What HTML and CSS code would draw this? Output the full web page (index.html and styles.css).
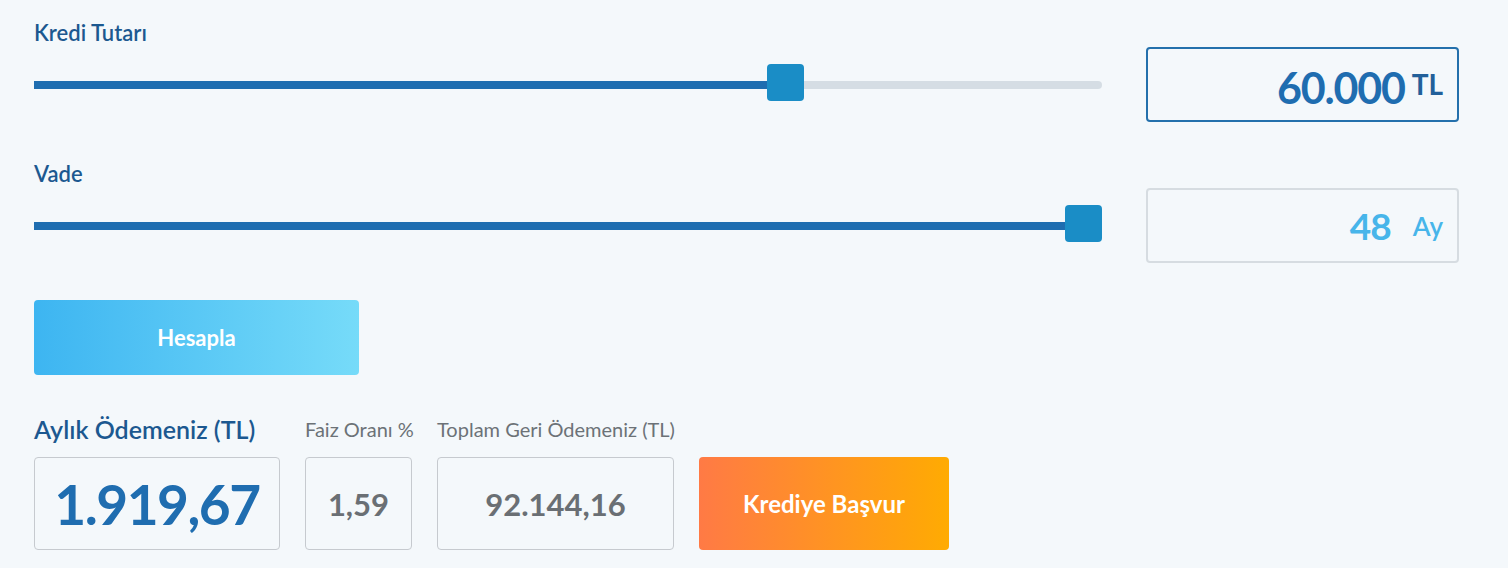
FILE: index.html
```html
<!DOCTYPE html>
<html lang="tr">
<head>
    <meta charset="UTF-8">
    <meta name="viewport" content="width=device-width, initial-scale=1.0">
    <title>Kredi Hesaplama</title>
    <link rel="stylesheet" href="styles.css">
</head>
<body>
    <main class="calc">
        <div class="field">
            <label class="field-label">Kredi Tutarı</label>
            <div class="field-row">
                <div class="slider" style="--p: 0.711">
                    <div class="slider-fill"></div>
                    <div class="slider-thumb"></div>
                </div>
                <div class="value-box value-box--active">
                    <span class="amount-num">60.000</span><span class="amount-unit">TL</span>
                </div>
            </div>
        </div>

        <div class="field">
            <label class="field-label">Vade</label>
            <div class="field-row">
                <div class="slider" style="--p: 1">
                    <div class="slider-fill"></div>
                    <div class="slider-thumb"></div>
                </div>
                <div class="value-box">
                    <span class="term-num">48</span><span class="term-unit">Ay</span>
                </div>
            </div>
        </div>

        <button class="btn btn-calc">Hesapla</button>

        <div class="results">
            <div class="result result--monthly">
                <div class="result-label result-label--main">Aylık Ödemeniz (TL)</div>
                <div class="result-box result-box--main">1.919,67</div>
            </div>
            <div class="result result--rate">
                <div class="result-label">Faiz Oranı %</div>
                <div class="result-box">1,59</div>
            </div>
            <div class="result result--total">
                <div class="result-label">Toplam Geri Ödemeniz (TL)</div>
                <div class="result-box">92.144,16</div>
            </div>
            <button class="btn btn-apply">Krediye Başvur</button>
        </div>
    </main>
</body>
</html>
```

FILE: styles.css
```css
body {
    margin: 0;
    background-color: #f4f8fb;
    font-family: Lato, "Open Sans", sans-serif;
}
.calc {
    padding: 18px 49px 0 34px;
}
.field {
    margin-bottom: 37px;
}
.field-label {
    display: block;
    padding-top: 3px;
    font-size: 22px;
    line-height: 24px;
    font-weight: 600;
    color: #1c5890;
    margin-bottom: 2px;
}
.field-row {
    display: flex;
    align-items: center;
    gap: 44px;
}
.slider {
    position: relative;
    width: 1068px;
    height: 8px;
    background-color: #d5dde4;
    border-radius: 0 4px 4px 0;
}
.slider-fill {
    width: calc((100% - 37px) * var(--p) + 18px);
    height: 100%;
    background-color: #1e6db0;
}
.slider-thumb {
    position: absolute;
    top: -17px;
    left: calc((100% - 37px) * var(--p));
    width: 37px;
    height: 37px;
    background-color: #1a8dc6;
    border-radius: 4px;
}
.value-box {
    box-sizing: border-box;
    width: 313px;
    height: 75px;
    border: 2px solid #d6dce1;
    border-radius: 4px;
    padding-right: 14px;
    text-align: right;
    line-height: 71px;
    white-space: nowrap;
}
.value-box--active {
    border-color: #2470ac;
}
.amount-num {
    font-size: 43px;
    font-weight: 700;
    letter-spacing: -1.2px;
    color: #1f6db0;
}
.amount-unit {
    font-size: 28px;
    font-weight: 700;
    color: #22609a;
    margin-left: 7px;
    vertical-align: 9px;
}
.term-num {
    font-size: 37px;
    font-weight: 700;
    letter-spacing: -1px;
    color: #47b5ea;
}
.term-unit {
    font-size: 26px;
    font-weight: 600;
    color: #47b5ea;
    margin-left: 22px;
    vertical-align: 4px;
}
.btn {
    border: none;
    border-radius: 4px;
    color: white;
    font-family: inherit;
    font-weight: 700;
    cursor: pointer;
}
.btn-calc {
    display: block;
    width: 325px;
    height: 75px;
    font-size: 22px;
    background: linear-gradient(to right, #3db5f1, #76dbf9);
}
.results {
    display: flex;
    align-items: flex-end;
    gap: 25px;
    margin-top: 39px;
}
.result-label {
    font-size: 20px;
    line-height: 30px;
    color: #6c7277;
    white-space: nowrap;
    margin-bottom: 13px;
}
.result-label--main {
    font-size: 25px;
    font-weight: 600;
    color: #1c5890;
}
.result-box {
    box-sizing: border-box;
    height: 93px;
    border: 1px solid #c6cacf;
    border-radius: 4px;
    display: flex;
    align-items: center;
    justify-content: center;
    font-size: 31px;
    font-weight: 700;
    color: #6a6f74;
}
.result-box--main {
    font-size: 55px;
    letter-spacing: -1.5px;
    color: #1f6db0;
}
.result--monthly {
    width: 246px;
}
.result--rate {
    width: 107px;
}
.result--total {
    width: 237px;
}
.btn-apply {
    width: 250px;
    height: 93px;
    font-size: 24px;
    background: linear-gradient(to right, #ff7a45, #ffab02);
}
```
